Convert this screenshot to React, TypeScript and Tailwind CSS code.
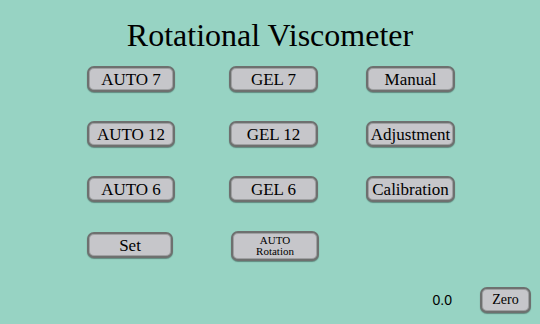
import React from "react";

const btn =
  "h-[26px] rounded-[7px] border-2 border-[#6e706f] bg-[#c6c6ca] text-black font-['Liberation_Serif','Times_New_Roman',serif] shadow-[inset_0_0_0_1px_#9fa0a2,0_1px_1px_rgba(0,0,0,0.35)] flex items-center justify-center leading-none";

function Btn({ label, w = "w-[88px]" }: { label: string; w?: string }) {
  return <button className={`${btn} ${w} text-[17px]`}>{label}</button>;
}

export default function App() {
  return (
    <div className="w-[540px] h-[324px] bg-[#97d3c3] flex flex-col overflow-hidden font-['Liberation_Serif','Times_New_Roman',serif]">
      <h1 className="pt-[19px] text-center text-[32px] leading-none text-black">
        Rotational Viscometer
      </h1>

      <div className="mt-[15px] pl-[87px] grid grid-cols-[142px_137px_89px] grid-rows-[26px_26px_26px_30px] gap-y-[29px]">
        <Btn label="AUTO 7" />
        <Btn label="GEL 7" w="w-[89px]" />
        <Btn label="Manual" w="w-[89px]" />

        <Btn label="AUTO 12" />
        <Btn label="GEL 12" w="w-[89px]" />
        <Btn label="Adjustment" w="w-[89px]" />

        <Btn label="AUTO 6" />
        <Btn label="GEL 6" w="w-[89px]" />
        <Btn label="Calibration" w="w-[89px]" />

        <button className={`${btn} w-[86px] text-[17px] mt-[1px] h-[25px]`}>Set</button>
        <button className={`${btn} ml-[2px] w-[88px] h-[30px] flex-col text-[11px] leading-[13px]`}>
          <span>AUTO</span>
          <span>Rotation</span>
        </button>
        <div />
      </div>

      <div className="mt-auto mb-[11px] flex items-center justify-end pr-[9px]">
        <span className="text-[14px] text-black mr-[28px] font-['Liberation_Sans',Arial,sans-serif]">
          0.0
        </span>
        <button className={`${btn} w-[51px] h-[24px] text-[14px]`}>Zero</button>
      </div>
    </div>
  );
}
